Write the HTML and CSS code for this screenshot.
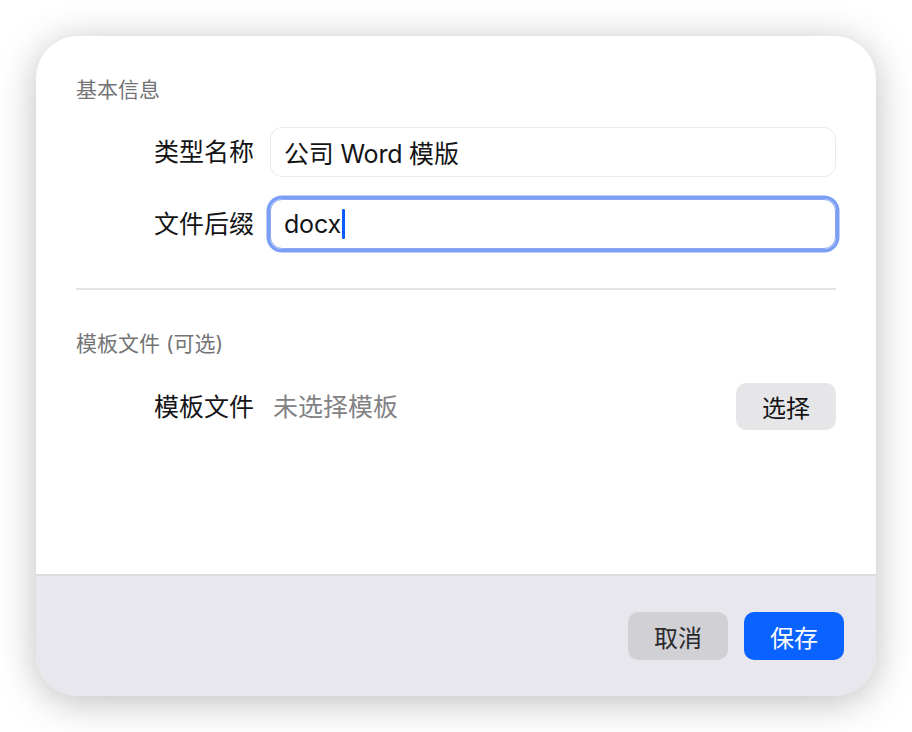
FILE: index.html
```html
<!DOCTYPE html>
<html lang="zh-CN">
<head>
<meta charset="utf-8">
<title>模板类型</title>
<link rel="stylesheet" href="styles.css">
</head>
<body>
<div class="dialog">
  <div class="content">
    <div class="section-title">基本信息</div>
    <div class="row">
      <div class="label">类型名称</div>
      <div class="field">公司 Word 模版</div>
    </div>
    <div class="row">
      <div class="label">文件后缀</div>
      <div class="field focused">docx<span class="caret"></span></div>
    </div>
    <div class="divider"></div>
    <div class="section-title">模板文件 (可选)</div>
    <div class="row file-row">
      <div class="label">模板文件</div>
      <div class="value">未选择模板</div>
      <button class="btn btn-light">选择</button>
    </div>
  </div>
  <div class="footer">
    <button class="btn btn-cancel">取消</button>
    <button class="btn btn-primary">保存</button>
  </div>
</div>
</body>
</html>
```
FILE: styles.css
```css
html, body {
  margin: 0;
  padding: 0;
  background: #ffffff;
}
body {
  font-family: "Inter", "Noto Sans CJK SC", sans-serif;
  color: #161618;
  padding: 36px;
  width: 840px;
}
.dialog {
  width: 840px;
  height: 660px;
  border-radius: 42px;
  background: #ffffff;
  box-shadow: 0 6px 38px rgba(0, 0, 0, 0.26);
  display: flex;
  flex-direction: column;
  overflow: hidden;
}
.content {
  flex: 1;
  padding: 39px 40px 0 40px;
  display: flex;
  flex-direction: column;
}
.section-title {
  font-size: 21px;
  line-height: 30px;
  color: #747476;
}
.row {
  display: flex;
  align-items: center;
  padding-left: 76px;
  margin-top: 22px;
}
.label {
  width: 102px;
  flex: none;
  text-align: right;
  font-size: 25px;
  line-height: 36px;
  color: #141416;
}
.field {
  flex: 1;
  margin-left: 16px;
  height: 50px;
  box-sizing: border-box;
  border: 1.5px solid #ebebeb;
  border-radius: 12px;
  padding: 0 13px;
  display: flex;
  align-items: center;
  font-size: 25px;
  letter-spacing: -0.2px;
  color: #141416;
}
.field.focused {
  border-color: #8aa9f0;
  box-shadow: 0 0 0 3.5px #7b9ff5;
}
.caret {
  display: inline-block;
  width: 3px;
  height: 30px;
  background: #0a5cff;
  border-radius: 1px;
  margin-left: 1px;
}
.divider {
  height: 2px;
  background: #e3e3e3;
  margin-top: 39px;
  margin-bottom: 39px;
}
.file-row {
  margin-top: 24px;
}
.value {
  flex: 1;
  margin-left: 19px;
  font-size: 25px;
  line-height: 36px;
  color: #828285;
}
.btn {
  font-family: "Inter", "Noto Sans CJK SC", sans-serif;
  font-size: 24px;
  border: none;
  border-radius: 10px;
  width: 100px;
  padding: 0;
  cursor: pointer;
}
.btn-light {
  height: 47px;
  background: #e6e6e8;
  color: #141416;
}
.footer {
  height: 122px;
  box-sizing: border-box;
  border-top: 2px solid #dcdce0;
  background: #e8e7ed;
  display: flex;
  justify-content: flex-end;
  align-items: flex-start;
  gap: 16px;
  padding: 36px 32px 0 0;
}
.btn-cancel {
  height: 48px;
  background: #d1d0d5;
  color: #2a2a2c;
}
.btn-primary {
  height: 48px;
  background: #0b63ff;
  color: #ffffff;
}
```
